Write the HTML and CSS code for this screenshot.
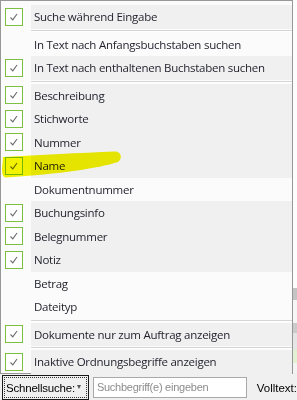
FILE: index.html
```html
<!DOCTYPE html>
<html lang="de">
<head>
<meta charset="utf-8">
<title>Schnellsuche</title>
<link rel="stylesheet" href="styles.css">
</head>
<body>
<div class="app">
  <div class="workspace">
    <div class="band band-white"></div>
    <div class="band band-head"></div>
    <div class="band band-light"></div>
    <div class="band band-grey"></div>
    <div class="band band-mid"></div>
    <div class="band band-green"></div>
    <div class="band band-end"></div>
  </div>
  <div class="toolbar">
    <div class="quick"><span class="quick-inner">Schnellsuche:<span class="caret">&#9662;</span></span></div>
    <div class="search">Suchbegriff(e) eingeben</div>
    <span class="fulltext">Volltext:</span>
  </div>

  <div class="menu">
    <div class="item on"><span class="gutter"><svg class="box" viewBox="0 0 18 18"><rect x="0.5" y="0.5" width="17" height="17"/><path d="M5.5 9.5 L7.8 11.8 L12 6"/></svg></span><span class="label">Suche während Eingabe</span></div>
    <div class="sep"></div>
    <div class="item"><span class="gutter"></span><span class="label">In Text nach Anfangsbuchstaben suchen</span></div>
    <div class="item on"><span class="gutter"><svg class="box" viewBox="0 0 18 18"><rect x="0.5" y="0.5" width="17" height="17"/><path d="M5.5 9.5 L7.8 11.8 L12 6"/></svg></span><span class="label">In Text nach enthaltenen Buchstaben suchen</span></div>
    <div class="sep"></div>
    <div class="item on"><span class="gutter"><svg class="box" viewBox="0 0 18 18"><rect x="0.5" y="0.5" width="17" height="17"/><path d="M5.5 9.5 L7.8 11.8 L12 6"/></svg></span><span class="label">Beschreibung</span></div>
    <div class="item on"><span class="gutter"><svg class="box" viewBox="0 0 18 18"><rect x="0.5" y="0.5" width="17" height="17"/><path d="M5.5 9.5 L7.8 11.8 L12 6"/></svg></span><span class="label">Stichworte</span></div>
    <div class="item on"><span class="gutter"><svg class="box" viewBox="0 0 18 18"><rect x="0.5" y="0.5" width="17" height="17"/><path d="M5.5 9.5 L7.8 11.8 L12 6"/></svg></span><span class="label">Nummer</span></div>
    <div class="item on"><span class="gutter"><svg class="box" viewBox="0 0 18 18"><rect x="0.5" y="0.5" width="17" height="17"/><path d="M5.5 9.5 L7.8 11.8 L12 6"/></svg></span><span class="label">Name</span></div>
    <div class="item"><span class="gutter"></span><span class="label">Dokumentnummer</span></div>
    <div class="item on"><span class="gutter"><svg class="box" viewBox="0 0 18 18"><rect x="0.5" y="0.5" width="17" height="17"/><path d="M5.5 9.5 L7.8 11.8 L12 6"/></svg></span><span class="label">Buchungsinfo</span></div>
    <div class="item on"><span class="gutter"><svg class="box" viewBox="0 0 18 18"><rect x="0.5" y="0.5" width="17" height="17"/><path d="M5.5 9.5 L7.8 11.8 L12 6"/></svg></span><span class="label">Belegnummer</span></div>
    <div class="item on"><span class="gutter"><svg class="box" viewBox="0 0 18 18"><rect x="0.5" y="0.5" width="17" height="17"/><path d="M5.5 9.5 L7.8 11.8 L12 6"/></svg></span><span class="label">Notiz</span></div>
    <div class="item"><span class="gutter"></span><span class="label">Betrag</span></div>
    <div class="item"><span class="gutter"></span><span class="label">Dateityp</span></div>
    <div class="sep"></div>
    <div class="item on"><span class="gutter"><svg class="box" viewBox="0 0 18 18"><rect x="0.5" y="0.5" width="17" height="17"/><path d="M5.5 9.5 L7.8 11.8 L12 6"/></svg></span><span class="label">Dokumente nur zum Auftrag anzeigen</span></div>
    <div class="sep"></div>
    <div class="item on"><span class="gutter"><svg class="box" viewBox="0 0 18 18"><rect x="0.5" y="0.5" width="17" height="17"/><path d="M5.5 9.5 L7.8 11.8 L12 6"/></svg></span><span class="label">Inaktive Ordnungsbegriffe anzeigen</span></div>
  </div>

  <svg class="marker" viewBox="0 0 125 34" width="125" height="34">
    <path d="M3 8 C 40 6, 80 4, 115 2.5 C 121 2.5, 123 9, 118 13 C 100 19, 60 25, 6 28.5 C 3 28.5, 2 25, 2 20 Z"/>
  </svg>
</div>
</body>
</html>
```
FILE: styles.css
```css
* { box-sizing: border-box; }
html, body { margin: 0; padding: 0; }
body {
  width: 297px;
  height: 400px;
  overflow: hidden;
  background: #f0f0f0;
}
.app {
  position: relative;
  width: 297px;
  height: 400px;
  display: flex;
  flex-direction: column;
}
.workspace {
  height: 373px;
  display: flex;
  flex-direction: column;
  background: #ffffff;
}
.band { width: 100%; }
.band-white { height: 288px; background: #fdfdfd; }
.band-head { height: 12px; background: #c4c4c4; }
.band-light { height: 23px; background: #f6f6f6; }
.band-grey { height: 10px; background: #cbcbcb; }
.band-mid { height: 17px; background: #e6e6e6; }
.band-green { height: 13px; background: #e2f1d3; }
.band-end { flex: 1; background: #f4f4f4; }

.toolbar {
  flex: 1;
  display: flex;
  align-items: center;
  padding: 2px 0 0 2px;
  font-family: "Liberation Sans", Arial, sans-serif;
  font-size: 11.5px;
  color: #000;
}
.quick {
  width: 87px;
  height: 25px;
  border: 1px solid #1a1a1a;
  padding: 1px;
  background: #f0f0f0;
}
.quick-inner {
  display: flex;
  align-items: center;
  height: 100%;
  border: 1px dotted #333;
  padding-left: 1px;
  letter-spacing: -0.2px;
}
.caret {
  font-size: 8px;
  color: #555;
  margin-left: 2px;
  margin-top: -3px;
}
.search {
  margin-left: 4px;
  width: 154px;
  height: 21px;
  border: 1px solid #a9a9a9;
  background: #fff;
  color: #8c8c8c;
  padding: 3px 0 0 3px;
  font-size: 11px;
  letter-spacing: -0.25px;
}
.fulltext {
  margin-left: 10px;
  font-size: 11.5px;
  white-space: nowrap;
}

.menu {
  position: absolute;
  left: 0;
  top: 0;
  width: 293px;
  height: 374px;
  border: 1px solid #979797;
  background: #fbfbfb;
  padding: 4px 0 0 0;
  display: flex;
  flex-direction: column;
  font-family: "Open Sans", "Noto Sans", sans-serif;
  font-size: 11.5px;
  letter-spacing: -0.25px;
  color: #1f1f2b;
}
.item {
  height: 23.5px;
  display: flex;
  align-items: stretch;
  flex: none;
}
.gutter {
  width: 30px;
  flex: none;
  display: flex;
  align-items: center;
  padding-left: 4px;
}
.box {
  width: 18px;
  height: 18px;
  display: block;
}
.box rect { fill: #ffffff; stroke: #7bc043; stroke-width: 1; }
.box path { fill: none; stroke: #6b6b6b; stroke-width: 1.1; }
.label {
  flex: 1;
  display: flex;
  align-items: center;
  padding-left: 3px;
  white-space: nowrap;
}
.item.on .label { background: #f0f0f0; }
.sep {
  height: 4px;
  flex: none;
  margin-left: 30px;
}
.sep::after {
  content: "";
  display: block;
  margin-top: 1px;
  height: 1px;
  background: #d5d5d5;
  border-bottom: 1px solid #ffffff;
  box-sizing: content-box;
}

.marker {
  position: absolute;
  left: 0;
  top: 149px;
  mix-blend-mode: multiply;
  pointer-events: none;
}
.marker path { fill: #f3f300; }
```
